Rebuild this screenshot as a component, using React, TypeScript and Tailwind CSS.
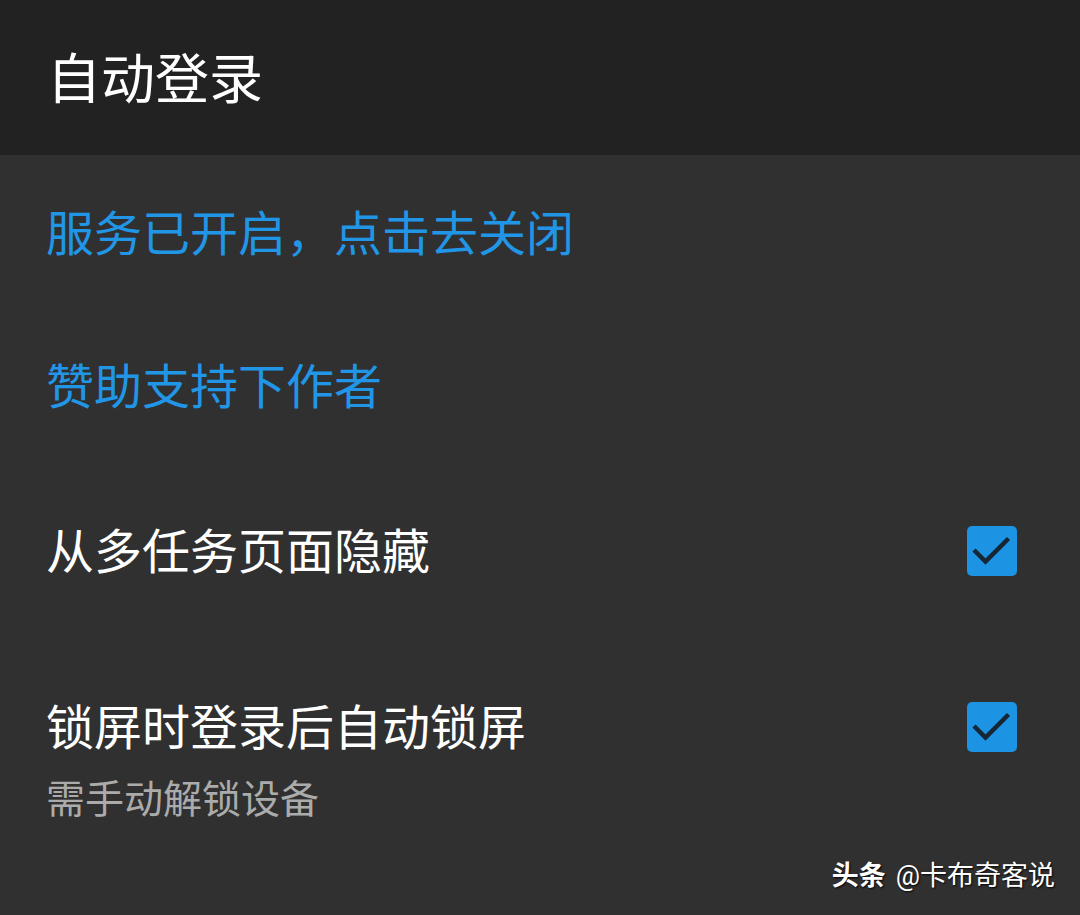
import React from 'react';

const FONT = "font-['Roboto','Noto_Sans_CJK_SC',sans-serif]";

function CheckBox() {
  return (
    <span className="block h-[50px] w-[50px] shrink-0 rounded-[5px] bg-[#1c93e3]">
      <svg viewBox="0 0 50 50" className="h-[50px] w-[50px]" fill="none">
        <path d="M7 24l11.5 11.5L41.5 12.5" stroke="#172634" strokeWidth="4.5" strokeLinecap="butt" strokeLinejoin="miter" />
      </svg>
    </span>
  );
}

interface RowProps {
  title: string;
  subtitle?: string;
  checked?: boolean;
  accent?: boolean;
  className?: string;
}

function SettingRow({ title, subtitle, checked, accent, className = '' }: RowProps) {
  return (
    <div className={`flex items-start pl-[46px] pr-[63px] ${className}`}>
      <div className="min-w-0 flex-1">
        <p className={`text-[48px] leading-[58px] ${accent ? 'text-[#2196e6]' : 'text-white'}`}>{title}</p>
        {subtitle ? (
          <p className="mt-[18px] text-[39px] leading-[48px] text-[#ababab]">{subtitle}</p>
        ) : null}
      </div>
      {checked ? (
        <div className="flex h-[58px] items-center pb-[4px]">
          <CheckBox />
        </div>
      ) : null}
    </div>
  );
}

export default function App() {
  return (
    <div className={`relative h-[915px] w-[1080px] overflow-hidden bg-[#303030] ${FONT}`}>
      <header className="flex h-[155px] items-center bg-[#222222] pl-[47px] pt-[6px]">
        <h1 className="text-[54px] font-normal leading-none text-white">自动登录</h1>
      </header>

      <div className="flex flex-col">
        <SettingRow accent title="服务已开启，点击去关闭" className="mt-[51px]" />
        <SettingRow accent title="赞助支持下作者" className="mt-[95px]" />
        <SettingRow checked title="从多任务页面隐藏" className="mt-[107px]" />
        <SettingRow checked title="锁屏时登录后自动锁屏" subtitle="需手动解锁设备" className="mt-[118px]" />
      </div>

      <div className="absolute bottom-[21px] right-[25px] flex items-center gap-[10px] text-[27px] leading-[36px] text-white [text-shadow:1px_1px_2px_rgba(0,0,0,0.9)]">
        <span className="font-bold">头条</span>
        <span>@卡布奇客说</span>
      </div>
    </div>
  );
}
